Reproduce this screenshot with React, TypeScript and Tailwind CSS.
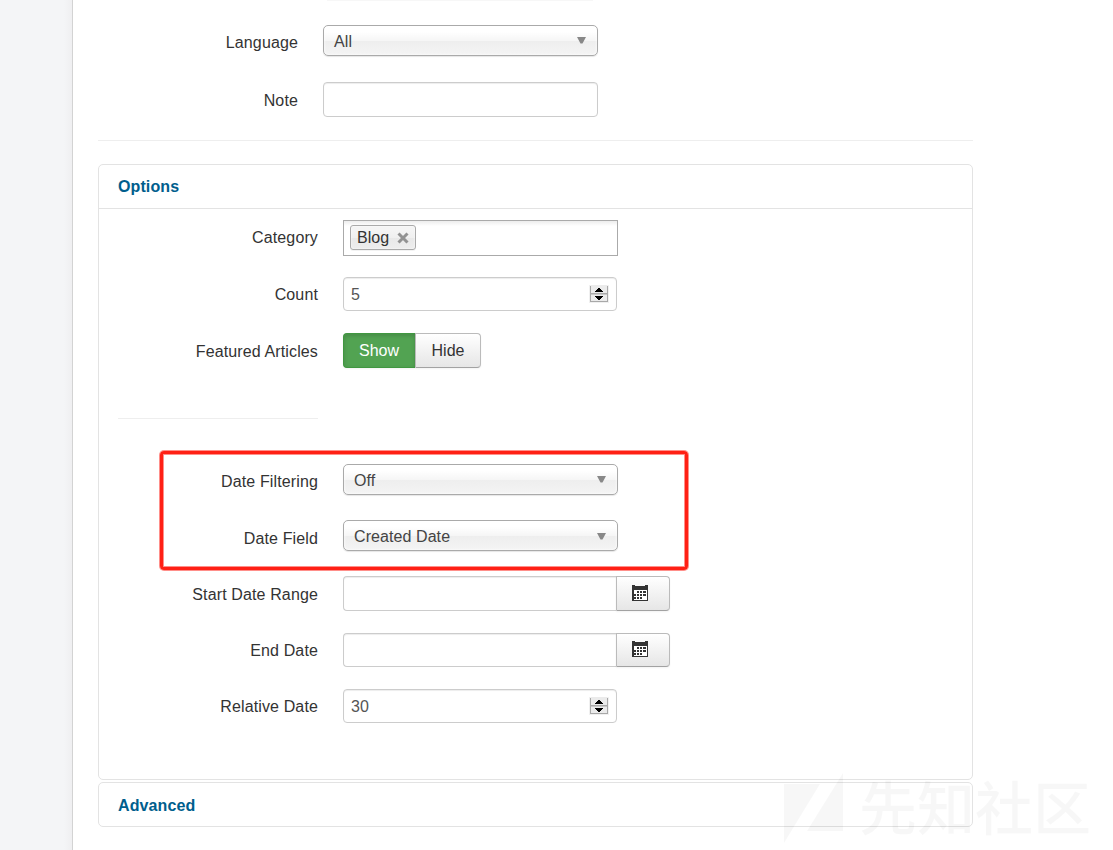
import type { ReactNode } from "react";

function Row({ label, height, labelTop, children }: { label: string; height: string; labelTop: string; children: ReactNode }) {
  return (
    <div className={`flex items-start ${height}`}>
      <label className={`w-[200px] shrink-0 text-right leading-5 tracking-[0.13px] ${labelTop}`}>{label}</label>
      <div className="ml-[25px] flex">{children}</div>
    </div>
  );
}

function Select({ value, arrowTop = "mt-[11px]" }: { value: string; arrowTop?: string }) {
  return (
    <div className="flex h-[31px] w-[275px] justify-between rounded-[5px] border border-[#aaa] bg-[linear-gradient(#fff_20%,#f6f6f6_50%,#eee_52%,#f4f4f4_100%)] pr-[11px] pl-[10px] text-[#444] shadow-[inset_0_0_3px_#fff,0_1px_1px_rgba(0,0,0,0.1)]">
      <span className="leading-8 tracking-[0.08px]">{value}</span>
      <svg className={arrowTop} width="9" height="7" viewBox="0 0 9 7">
        <path d="M0 0h9L5.5 6.5h-2z" fill="#888" />
      </svg>
    </div>
  );
}

function NumberField({ value }: { value: string }) {
  return (
    <div className="flex h-[34px] w-[274px] justify-between rounded-[4px] border border-[#ccc] pr-[7px] pl-[7px] text-[#555] shadow-[inset_0_1px_1px_rgba(0,0,0,0.075)]">
      <span className="leading-[34px] tracking-[0.15px]">{value}</span>
      <svg className="mt-[7px]" width="20" height="18" viewBox="0 0 20 18" shapeRendering="crispEdges">
        <path d="M0 0h20v18H0z" fill="#f0f0f0" />
        <path d="M1 1h1v16H1zM18 1h1v16h-1zM2 8h16v1H2zM2 16h16v1H2z" fill="#a8a8a8" />
        <path d="M2 9h16v1H2z" fill="#c8c8c8" />
        <path d="M2 0h16v8H2zM2 10h16v6H2z" fill="#ebebeb" />
        <path d="M9 3h2v1h1v1h1v1h1v1H6V6h1V5h1V4h1zM6 11h8v1h-1v1h-1v1h-1v1H9v-1H8v-1H7v-1H6z" fill="#000" />
      </svg>
    </div>
  );
}

function DateField({ height, iconTop }: { height: string; iconTop: string }) {
  return (
    <div className={`flex ${height}`}>
      <div className="w-[273px] rounded-l-[4px] border border-r-0 border-[#ccc] shadow-[inset_0_1px_1px_rgba(0,0,0,0.075)]" />
      <button className={`flex w-[54px] items-start rounded-r-[4px] border border-[#bbb] border-b-[#a2a2a2] bg-linear-to-b from-white to-[#e6e6e6] pl-[15px] shadow-[inset_0_1px_0_rgba(255,255,255,0.2),0_1px_2px_rgba(0,0,0,0.05)] ${iconTop}`}>
        <svg width="17" height="16" viewBox="0 0 17 16" shapeRendering="crispEdges">
          <path d="M1 5h15v10H1z" fill="#fff" />
          <path d="M0 0h3v1h10V0h3v16H0zM2 5v10h13V5z" fill="#333" fillRule="evenodd" />
          <path d="M5 6h2v2H5zM8 6h2v2H8zM11 6h3v2h-3zM2 9h2v2H2zM5 9h2v2H5zM8 9h2v2H8zM11 9h3v2h-3zM2 12h2v2H2zM5 12h2v2H5zM8 12h2v2H8z" fill="#333" />
        </svg>
      </button>
    </div>
  );
}

function Watermark() {
  return (
    <div className="absolute top-[772px] left-[784px] flex h-[73px] w-[329px] text-black/[0.033]">
      <svg className="mt-px shrink-0" width="60" height="72" viewBox="0 0 60 72">
        <path d="M0 11h36L0 70zM59 0v58H23z" fill="currentColor" />
      </svg>
      <span className="ml-[15px] text-[58px] leading-[67px] font-medium whitespace-nowrap font-['Noto_Sans_CJK_SC',sans-serif]">先知社区</span>
    </div>
  );
}

export default function App() {
  return (
    <div className="relative flex h-[850px] w-[1113px] overflow-hidden bg-white font-['Liberation_Sans',Arial,sans-serif] text-base text-[#333]">
      <aside className="w-[72px] shrink-0 bg-[#f4f5f7] bg-[linear-gradient(to_right,#f4f5f7_64px,#efeff1_72px)]" />
      <main className="flex-1 border-l border-[#d3d3d3] pl-[25px]">
        <div className="ml-[229px] h-[25px] w-[266px] border-t border-[#f7f7f7]" />
        <Row label="Language" height="h-[57px]" labelTop="pt-2">
          <Select value="All" />
        </Row>
        <Row label="Note" height="h-[58px]" labelTop="pt-[9px]">
          <div className="h-[35px] w-[275px] rounded-[4px] border border-[#ccc] shadow-[inset_0_1px_1px_rgba(0,0,0,0.075)]" />
        </Row>
        <hr className="w-[875px] border-[#eee]" />

        <section className="mt-[23px] h-[616px] w-[875px] rounded-[5px] border border-[#e3e3e3]">
          <h2 className="h-11 border-b border-[#e3e3e3] pl-[19px] leading-[43px] font-bold tracking-[0.1px] text-[#005e8d]">Options</h2>
          <div className="pt-[11px] pl-[19px]">
            <Row label="Category" height="h-[57px]" labelTop="pt-2">
              <div className="h-9 w-[275px] border border-[#aaa] bg-[linear-gradient(#eee_1%,#fff_15%)] pt-1 pl-[6px]">
                <span className="flex h-[25px] w-[66px] items-center rounded-[3px] border border-[#aaa] bg-[linear-gradient(#f4f4f4_20%,#f0f0f0_50%,#e8e8e8_52%,#eee_100%)] pl-[6px] leading-5 shadow-[inset_0_0_2px_#fff,0_1px_0_rgba(0,0,0,0.05)]">
                  Blog
                  <svg className="ml-[8px]" width="12" height="12" viewBox="0 0 12 12">
                    <path d="M1.5 1.5l9 9M10.5 1.5l-9 9" stroke="#929292" strokeWidth="3" />
                  </svg>
                </span>
              </div>
            </Row>
            <Row label="Count" height="h-14" labelTop="pt-2">
              <NumberField value="5" />
            </Row>
            <Row label="Featured Articles" height="h-[85px]" labelTop="pt-[9px]">
              <button className="h-[35px] w-[72px] rounded-l-[4px] border border-r-0 border-[#409740] bg-[#52a352] pt-px pr-px text-white shadow-[inset_0_2px_4px_rgba(0,0,0,0.15),0_1px_2px_rgba(0,0,0,0.05)]">Show</button>
              <button className="h-[35px] w-[66px] rounded-r-[4px] border border-[#bbb] border-b-[#a2a2a2] bg-linear-to-b from-white to-[#e6e6e6] pt-px shadow-[0_1px_2px_rgba(0,0,0,0.05)]">Hide</button>
            </Row>
            <hr className="mb-[45px] w-[200px] border-[#eee]" />
            <Row label="Date Filtering" height="h-14" labelTop="pt-2">
              <Select value="Off" />
            </Row>
            <Row label="Date Field" height="h-14" labelTop="pt-[9px]">
              <Select value="Created Date" arrowTop="mt-3" />
            </Row>
            <Row label="Start Date Range" height="h-[57px]" labelTop="pt-[9px]">
              <DateField height="h-[35px]" iconTop="pt-2" />
            </Row>
            <Row label="End Date" height="h-14" labelTop="pt-2">
              <DateField height="h-[34px]" iconTop="pt-[7px]" />
            </Row>
            <Row label="Relative Date" height="h-[34px]" labelTop="pt-2">
              <NumberField value="30" />
            </Row>
          </div>
        </section>
        <section className="mt-[2px] h-[45px] w-[875px] rounded-[5px] border border-[#e3e3e3] pl-[19px] leading-[45px] font-bold tracking-[0.1px] text-[#005e8d]">Advanced</section>
      </main>
      <div className="absolute top-[451px] left-[160px] h-[119px] w-[528px] rounded-[4px] border-3 border-[#ff2015] shadow-[0_0_0_1px_rgba(255,32,21,0.5),inset_0_0_0_1px_rgba(255,32,21,0.5)]" />
      <Watermark />
    </div>
  );
}
